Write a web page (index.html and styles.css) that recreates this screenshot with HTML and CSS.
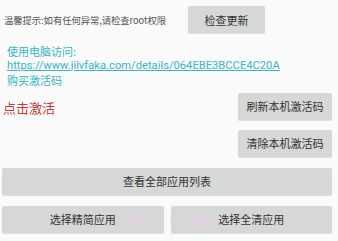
FILE: index.html
```html
<!DOCTYPE html>
<html>
<head>
<meta charset="utf-8">
<link rel="stylesheet" href="styles.css">
</head>
<body>
<div class="page">
  <div class="top-row">
    <div class="tip">温馨提示:如有任何异常,请检查root权限</div>
    <button class="btn btn-update">检查更新</button>
  </div>
  <div class="links">
    <div class="line">使用电脑访问:</div>
    <a class="line url" href="#">https://www.jilvfaka.com/details/064EBE3BCCE4C20A</a>
    <div class="line">购买激活码</div>
  </div>
  <div class="activate-row">
    <div class="activate">点击激活</div>
    <div class="side-btns">
      <button class="btn btn-side">刷新本机激活码</button>
      <button class="btn btn-side">清除本机激活码</button>
    </div>
  </div>
  <button class="btn btn-full">查看全部应用列表</button>
  <div class="pair">
    <button class="btn">选择精简应用</button>
    <button class="btn">选择全清应用</button>
  </div>
  <div class="watermark">东儿 • 1WY</div>
</div>
</body>
</html>
```
FILE: styles.css
```css
html, body {
  margin: 0;
  padding: 0;
  background: #fafafa;
}
body {
  font-family: "Noto Sans CJK SC", "Noto Sans", Roboto, sans-serif;
  width: 338px;
  height: 241px;
  overflow: hidden;
}
.page {
  position: relative;
  padding: 6px 6px 0 2px;
}
.top-row {
  display: flex;
  align-items: center;
  height: 27px;
}
.tip {
  width: 184px;
  padding-left: 2px;
  font-size: 9.4px;
  color: #555;
  white-space: nowrap;
  letter-spacing: -0.1px;
  margin-top: 1px;
}
.btn {
  display: block;
  border: none;
  margin: 0;
  background: #d6d7d7;
  color: #333;
  font-family: "Noto Sans CJK SC", sans-serif;
  font-size: 11px;
  height: 27px;
  border-radius: 2px;
  box-shadow: 0 1px 1px rgba(0,0,0,0.12);
  padding: 0;
}
.btn-update {
  width: 77px;
}
.links {
  margin-top: 11px;
  padding-left: 5px;
  color: #39b4c2;
  font-size: 11px;
  line-height: 14.5px;
}
.line {
  display: block;
  white-space: nowrap;
}
.url {
  font-family: Roboto, sans-serif;
  font-size: 11.2px;
  color: #39b4c2;
  text-decoration: underline;
}
.activate-row {
  display: flex;
  justify-content: space-between;
  margin-top: 5px;
}
.activate {
  color: #c33a36;
  font-size: 13px;
  line-height: 18px;
  padding-left: 1px;
  margin-top: 6px;
}
.side-btns {
  display: flex;
  flex-direction: column;
  gap: 10px;
}
.btn-side {
  width: 94px;
}
.btn-full {
  width: 330px;
  margin-top: 11px;
}
.pair {
  display: flex;
  gap: 7px;
  margin-top: 11px;
}
.pair .btn {
  flex: 1;
}
.watermark {
  position: absolute;
  left: 126px;
  top: 209px;
  font-family: "Noto Sans CJK SC", sans-serif;
  font-size: 17px;
  color: rgba(240, 200, 235, 0.75);
  white-space: nowrap;
  pointer-events: none;
}
```
